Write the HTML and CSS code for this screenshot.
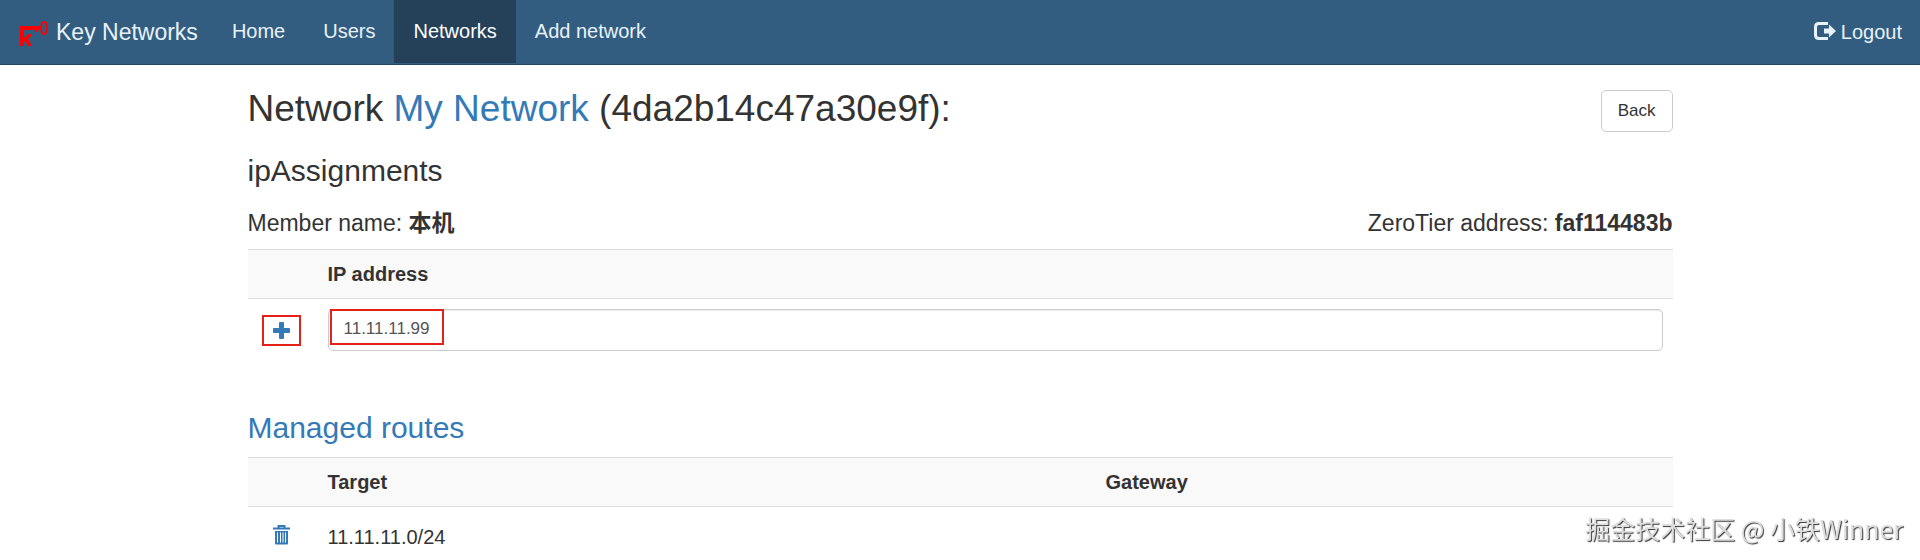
FILE: index.html
```html
<!DOCTYPE html>
<html lang="en">
<head>
    <meta charset="UTF-8">
    <meta name="viewport" content="width=device-width, initial-scale=1.0">
    <title>Key Networks</title>
    <link rel="stylesheet" href="styles.css">
</head>
<body>
    <nav class="navbar">
        <a class="navbar-brand" href="#">
            <svg class="brand-logo" viewBox="0 0 28 25" aria-hidden="true">
                <path d="M0 5H21V9H18V11H15V9H4V17L8 13H11V15L8 18L12 25H8L5 20L4 21V25H0Z" fill="#f00"/>
                <ellipse cx="24" cy="7" rx="3" ry="6" fill="none" stroke="#f00" stroke-width="2"/>
            </svg>
            Key Networks
        </a>
        <ul class="nav">
            <li><a href="#">Home</a></li>
            <li><a href="#">Users</a></li>
            <li><a class="active" href="#">Networks</a></li>
            <li><a href="#">Add network</a></li>
        </ul>
        <a class="logout" href="#">
            <svg class="logout-icon" viewBox="0 0 22 18" aria-hidden="true">
                <path d="M14 1.500H5Q1.500 1.500 1.500 5V13Q1.500 16.500 5 16.500H14" fill="none" stroke="currentColor" stroke-width="3"/>
                <path d="M10 6.500H15V2.500L22 9L15 15.500V11.500H10Z" fill="currentColor"/>
            </svg>
            Logout
        </a>
    </nav>

    <main class="container">
        <div class="page-head">
            <h2>Network <a href="#">My Network</a> (4da2b14c47a30e9f):</h2>
            <button type="button" class="btn">Back</button>
        </div>
        <h3>ipAssignments</h3>
        <div class="member">
            <h4>Member name: <b>本机</b></h4>
            <h4>ZeroTier address: <b>faf114483b</b></h4>
        </div>
        <form>
            <table class="table">
                <thead>
                    <tr>
                        <th class="col-action"></th>
                        <th><label for="ip">IP address</label></th>
                    </tr>
                </thead>
                <tbody>
                    <tr>
                        <td class="col-action">
                            <button type="submit" class="btn-icon marked" aria-label="Add">
                                <svg class="icon-plus" viewBox="0 0 17 17" aria-hidden="true">
                                    <path d="M7 0H10Q11 0 11 1V6H16Q17 6 17 7V10Q17 11 16 11H11V16Q11 17 10 17H7Q6 17 6 16V11H1Q0 11 0 10V7Q0 6 1 6H6V1Q6 0 7 0Z" fill="currentColor"/>
                                </svg>
                            </button>
                        </td>
                        <td>
                            <div class="field">
                                <input type="text" id="ip" class="form-control" value="11.11.11.99">
                                <span class="field-mark"></span>
                            </div>
                        </td>
                    </tr>
                </tbody>
            </table>
        </form>

        <h3 class="routes-title"><a href="#">Managed routes</a></h3>
        <table class="table">
            <thead>
                <tr>
                    <th class="col-action"></th>
                    <th>Target</th>
                    <th class="col-gateway">Gateway</th>
                </tr>
            </thead>
            <tbody>
                <tr class="route">
                    <td class="col-action">
                        <button type="button" class="btn-icon" aria-label="Delete">
                            <svg class="icon-trash" viewBox="0 0 17 20" aria-hidden="true">
                                <path d="M0 3.500H17M5.500 3V1H11.500V3" fill="none" stroke="currentColor" stroke-width="2"/>
                                <path d="M2 6H15V18.500Q15 19.500 14 19.500H3Q2 19.500 2 18.500Z" fill="currentColor"/>
                                <path d="M4.500 7.500V17.500M7.500 7.500V17.500M10 7.500V17.500M12.500 7.500V17.500" stroke="#fff" stroke-width="1"/>
                            </svg>
                        </button>
                    </td>
                    <td>11.11.11.0/24</td>
                    <td></td>
                </tr>
            </tbody>
        </table>
    </main>

    <div class="watermark">掘金技术社区 @ 小铁Winner</div>
</body>
</html>
```
FILE: styles.css
```css
* {
    box-sizing: border-box;
}
body {
    margin: 0;
    font-family: "Liberation Sans", "Noto Sans CJK SC", Arial, sans-serif;
    font-size: 20px;
    line-height: 28px;
    color: #333;
    background-color: #fff;
}
a {
    color: #337ab7;
    text-decoration: none;
}
.navbar {
    display: flex;
    align-items: center;
    height: 65px;
    padding: 0 18px 0 20px;
    color: #e8f2fa;
    background-color: #325d80;
    border-bottom: 1px solid #244560;
}
.navbar a {
    color: inherit;
}
.navbar-brand {
    display: flex;
    align-items: center;
    gap: 8px;
    margin-right: 15px;
    font-size: 23px;
}
.brand-logo {
    width: 28px;
    height: 25px;
    margin-top: 3px;
}
.nav {
    display: flex;
    flex: 1;
    align-self: flex-start;
    margin: 0;
    padding: 0;
    list-style: none;
}
.nav a {
    display: block;
    padding: 17px 19px 18px;
}
.nav .active {
    color: #fff;
    background-color: #254159;
}
.logout {
    display: flex;
    align-items: center;
    gap: 5px;
}
.logout-icon {
    width: 22px;
    height: 18px;
    margin-bottom: 2px;
}
.container {
    width: 1425px;
    max-width: 100%;
    margin: 0 auto;
}
.page-head {
    display: flex;
    justify-content: space-between;
    align-items: flex-start;
    padding-top: 25px;
}
h2, h3, h4 {
    margin: 0;
    font-weight: normal;
}
h2 {
    font-size: 37px;
    line-height: 38px;
}
h3 {
    margin-top: 23px;
    font-size: 30px;
    line-height: 32px;
}
h4 {
    font-size: 23px;
    line-height: 26px;
}
.btn {
    height: 42px;
    padding: 0 16px;
    font: inherit;
    font-size: 17px;
    color: #333;
    background-color: #fff;
    border: 1px solid #ccc;
    border-radius: 5px;
    cursor: pointer;
}
.member {
    display: flex;
    justify-content: space-between;
    margin-top: 23px;
    margin-bottom: 13px;
}
.table {
    width: 100%;
    table-layout: fixed;
    border-collapse: collapse;
}
.table th {
    padding: 10px;
    text-align: left;
    background-color: #f9f9f9;
    border-top: 1px solid #ddd;
    border-bottom: 1px solid #ddd;
}
.table td {
    padding: 10px;
}
.table .col-action {
    width: 70px;
    padding: 0 14px;
}
.col-gateway {
    width: 577px;
}
.btn-icon {
    display: flex;
    justify-content: center;
    align-items: center;
    width: 39px;
    height: 31px;
    padding: 0;
    color: #337ab7;
    background: none;
    border: 2px solid transparent;
    cursor: pointer;
}
.marked {
    border-color: #e32119;
}
.icon-plus {
    width: 17px;
    height: 17px;
}
.icon-trash {
    width: 17px;
    height: 20px;
}
.field {
    position: relative;
}
.form-control {
    display: block;
    width: 100%;
    height: 42px;
    padding: 0 15px 3px;
    font: inherit;
    font-size: 17px;
    color: #555;
    border: 1px solid #ccc;
    border-radius: 5px;
    box-shadow: inset 0 1px 1px rgba(0, 0, 0, 0.08);
}
/* red frame round the entered address */
.field-mark {
    position: absolute;
    top: 0;
    left: 2px;
    width: 114px;
    height: 36px;
    border: 2px solid #e32119;
    pointer-events: none;
}
.routes-title {
    margin-top: 51px;
    margin-bottom: 13px;
}
.table .route td {
    padding-top: 16px;
    padding-bottom: 8px;
}
.table .route .col-action {
    padding-top: 12px;
}
.watermark {
    position: fixed;
    right: 17px;
    bottom: 18px;
    font-family: "Noto Sans CJK SC", sans-serif;
    font-size: 25px;
    color: #ddd;
    text-shadow: 1px 1px 1px #333;
}
```
